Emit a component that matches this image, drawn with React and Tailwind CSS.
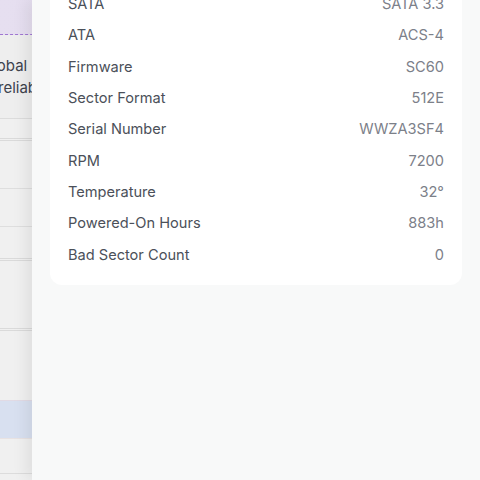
import React from 'react';

const specs = [
    ['SATA', 'SATA 3.3'],
    ['ATA', 'ACS-4'],
    ['Firmware', 'SC60'],
    ['Sector Format', '512E'],
    ['Serial Number', 'WWZA3SF4'],
    ['RPM', '7200'],
    ['Temperature', '32°'],
    ['Powered-On Hours', '883h'],
    ['Bad Sector Count', '0'],
];

const BackgroundPage = () => (
    <div className="w-full h-full bg-[#f8f8f8] flex flex-col">
        <div className="h-[35px] bg-gradient-to-r from-[#eee7f8] to-[#e9e0f5] border-b border-dashed border-[#a57ad8]" />
        <div className="h-[83px] bg-[#f6f6f6] pt-[20px] text-[15px] leading-[22px] text-[#3f4550] -ml-[16px]">
            <p>global health</p>
            <p className="ml-[14px]">reliability</p>
        </div>
        <div className="h-[20px] border-t border-[#e4e4e4]" />
        <div className="h-[50px] border-t-[3px] border-double border-[#e2e2e2]" />
        <div className="h-[38px] border-t border-[#e6e6e6]" />
        <div className="h-[32px] border-t border-[#e6e6e6]" />
        <div className="h-[70px] border-t-[3px] border-double border-[#e2e2e2]" />
        <div className="h-[72px] border-t-[3px] border-double border-[#e2e2e2]" />
        <div className="h-[38px] bg-[#dfe8f8] border-t border-[#e9e2ec]" />
        <div className="h-[35px] border-t border-[#f0eaea]" />
        <div className="flex-1 border-t border-[#e4e4e4]" />
    </div>
);

const SpecRow = ({ label, value }) => (
    <div className="h-[31.4px] flex items-center justify-between">
        <span className="text-[#4b5059]">{label}</span>
        <span className="text-[#7c8089]">{value}</span>
    </div>
);

export default function App() {
    return (
        <div className="relative w-[480px] h-[480px] overflow-hidden" style={{ fontFamily: 'Inter, "Noto Sans", sans-serif' }}>
            <BackgroundPage />
            <div className="absolute inset-0 bg-black/[0.03]" />
            <div className="absolute top-0 bottom-0 right-0 left-[32px] bg-[#f8f9f9] shadow-[-6px_0_14px_rgba(0,0,0,0.07)] overflow-hidden">
                <div className="px-[18px] -mt-[23px]">
                    <div className="bg-white rounded-xl pt-3 pb-[13px] px-[18px] text-[14.6px]">
                        {specs.map(([label, value]) => (
                            <SpecRow key={label} label={label} value={value} />
                        ))}
                    </div>
                </div>
            </div>
        </div>
    );
}
